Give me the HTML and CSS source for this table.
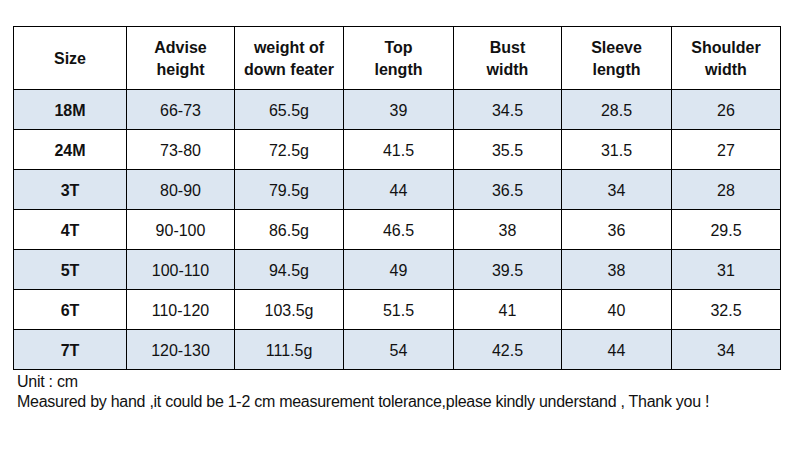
FILE: index.html
```html
<!DOCTYPE html>
<html>
<head>
<meta charset="utf-8">
<link rel="stylesheet" href="styles.css">
</head>
<body>
<div class="page">
<table class="chart">
<colgroup>
<col class="c1"><col class="c2"><col class="c3"><col class="c4"><col class="c5"><col class="c6"><col class="c7">
</colgroup>
<thead>
<tr><th>Size</th><th>Advise<br>height</th><th>weight of<br>down feater</th><th>Top<br>length</th><th>Bust<br>width</th><th>Sleeve<br>length</th><th>Shoulder<br>width</th></tr>
</thead>
<tbody>
<tr class="alt"><td class="sz">18M</td><td>66-73</td><td>65.5g</td><td>39</td><td>34.5</td><td>28.5</td><td>26</td></tr>
<tr><td class="sz">24M</td><td>73-80</td><td>72.5g</td><td>41.5</td><td>35.5</td><td>31.5</td><td>27</td></tr>
<tr class="alt"><td class="sz">3T</td><td>80-90</td><td>79.5g</td><td>44</td><td>36.5</td><td>34</td><td>28</td></tr>
<tr><td class="sz">4T</td><td>90-100</td><td>86.5g</td><td>46.5</td><td>38</td><td>36</td><td>29.5</td></tr>
<tr class="alt"><td class="sz">5T</td><td>100-110</td><td>94.5g</td><td>49</td><td>39.5</td><td>38</td><td>31</td></tr>
<tr><td class="sz">6T</td><td>110-120</td><td>103.5g</td><td>51.5</td><td>41</td><td>40</td><td>32.5</td></tr>
<tr class="alt"><td class="sz">7T</td><td>120-130</td><td>111.5g</td><td>54</td><td>42.5</td><td>44</td><td>34</td></tr>
</tbody>
</table>
<div class="notes">
<p>Unit : cm</p>
<p>Measured by hand ,it could be 1-2 cm measurement tolerance,please kindly understand , Thank you !</p>
</div>
</div>
</body>
</html>
```
FILE: styles.css
```css
html, body {
  margin: 0;
  padding: 0;
  background: #ffffff;
}
body {
  font-family: "Liberation Sans", Arial, sans-serif;
  color: #111111;
}
.page {
  padding: 26px 0 0 13px;
}
.chart {
  border-collapse: collapse;
  table-layout: fixed;
  width: 768px;
  font-size: 16px;
}
.c1 { width: 113px; }
.c2 { width: 108px; }
.c3 { width: 109px; }
.c4 { width: 110px; }
.c5 { width: 108px; }
.c6 { width: 110px; }
.c7 { width: 109px; }
.chart th, .chart td {
  border: 1px solid #000000;
  text-align: center;
  vertical-align: middle;
  padding: 2px 0 0 0;
  box-sizing: border-box;
}
.chart th {
  height: 63px;
  font-weight: bold;
  line-height: 22px;
}
.chart td {
  height: 40px;
}
.chart .sz {
  font-weight: bold;
}
.alt td {
  background: #dce6f1;
}
.notes {
  padding: 2px 0 0 4px;
  font-size: 16px;
  line-height: 20px;
  letter-spacing: -0.27px;
}
.notes p {
  margin: 0;
}
```
